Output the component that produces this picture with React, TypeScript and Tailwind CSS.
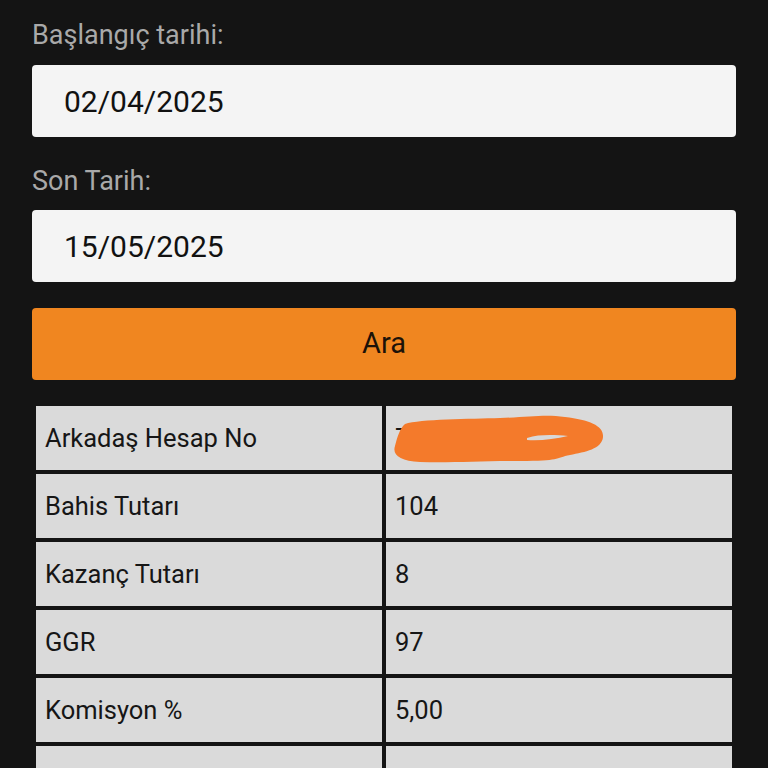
import React from "react";

const rows: [string, string][] = [
  ["Arkadaş Hesap No", "7"],
  ["Bahis Tutarı", "104"],
  ["Kazanç Tutarı", "8"],
  ["GGR", "97"],
  ["Komisyon %", "5,00"],
  ["\u00a0", "\u00a0"],
];

export default function App() {
  return (
    <div
      className="min-h-[768px] w-full bg-[#141414] px-8 pt-[21px]"
      style={{ fontFamily: "Roboto, 'Noto Sans', sans-serif" }}
    >
      <div className="text-[27px] leading-[28px] text-[#a9a9a9]">Başlangıç tarihi:</div>
      <div className="mt-4 flex h-[72px] items-center rounded-[4px] bg-[#f4f4f4] pl-8 text-[30px] text-[#111]">
        02/04/2025
      </div>
      <div className="mt-[30px] text-[27px] leading-[28px] text-[#a9a9a9]">Son Tarih:</div>
      <div className="mt-[15px] flex h-[72px] items-center rounded-[4px] bg-[#f4f4f4] pl-8 text-[30px] text-[#111]">
        15/05/2025
      </div>
      <button className="mt-[26px] flex h-[72px] w-full items-center justify-center rounded-[4px] bg-[#f08620] text-[29px] text-[#1c1208]">
        Ara
      </button>
      <table className="mt-[22px] w-full table-fixed border-separate border-spacing-[4px]">
        <tbody>
          {rows.map(([k, v], i) => (
            <tr key={i}>
              <td className="h-[64px] bg-[#dadada] pl-[9px] text-[25.5px] text-[#161616]">{k}</td>
              <td className="relative h-[64px] bg-[#dadada] pl-[9px] text-[25.5px] text-[#161616]">
                {v}
                {i === 0 && (
                  <svg
                    className="absolute left-[4px] top-[4px]"
                    width="220"
                    height="60"
                    viewBox="390 410 220 60"
                  >
                    <path
                      d="M405,424 C420,419 470,419 500,418 C530,417 545,414 565,417 C590,420 604,426 603,437 C602,449 585,452 570,455 C555,458 560,461 520,461 C480,461 450,463 420,462 C400,461 392,455 395,446 C397,438 400,428 405,424 Z"
                      fill="#f47a2b"
                    />
                    <path
                      d="M527,438 C540,434 555,435 568,436 C555,439 540,441 527,440 Z"
                      fill="#d8d8d8"
                    />
                  </svg>
                )}
              </td>
            </tr>
          ))}
        </tbody>
      </table>
    </div>
  );
}
